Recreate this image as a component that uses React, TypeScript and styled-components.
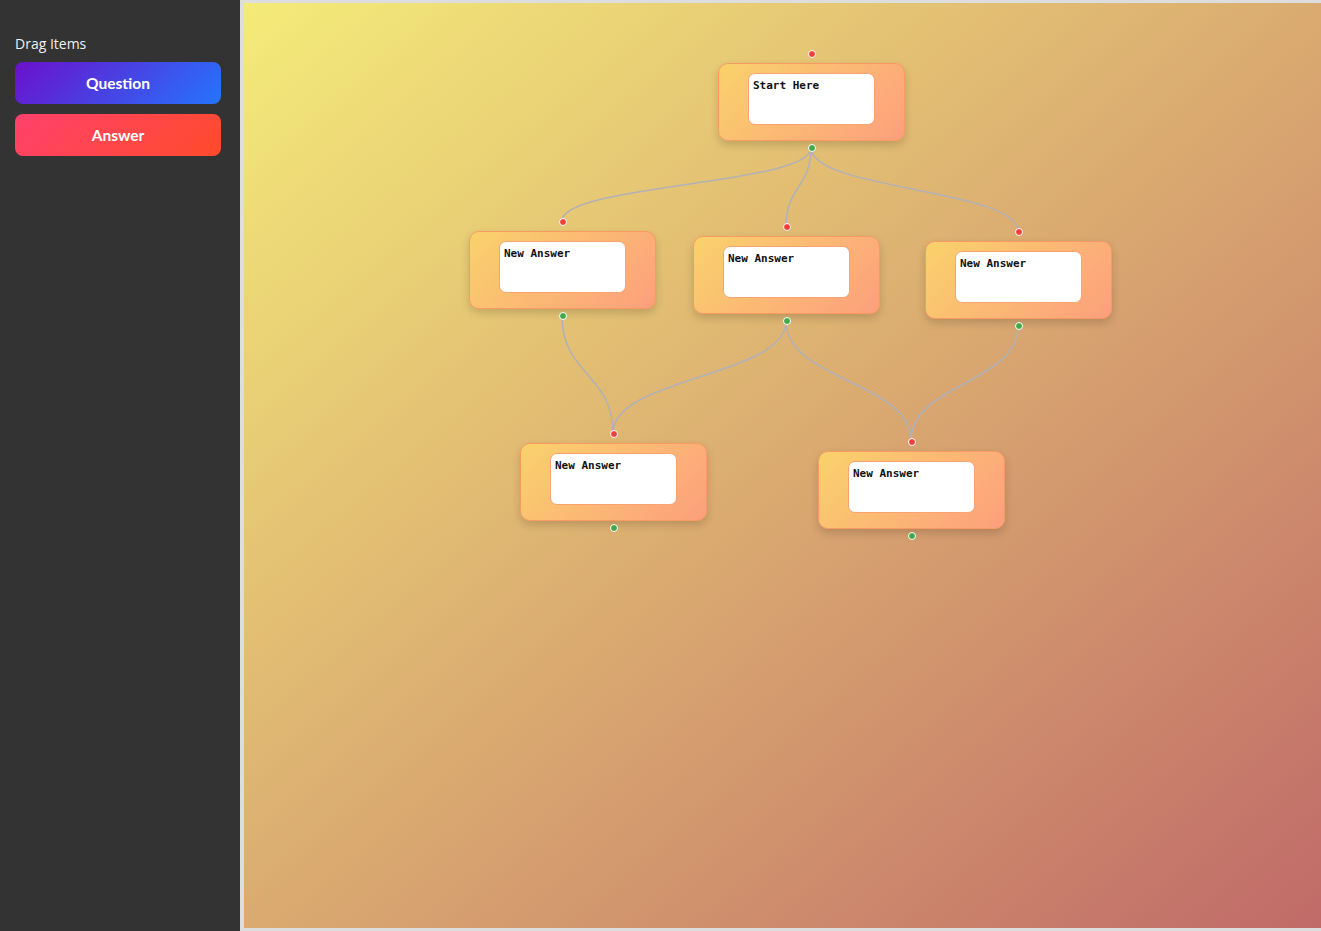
import React from "react";
import styled, { createGlobalStyle } from "styled-components";

const GlobalStyle = createGlobalStyle`
  html, body { margin: 0; padding: 0; height: 100%; overflow: hidden; }
  body { font-family: "Open Sans", "Noto Sans", sans-serif; }
  #root { height: 100%; }
  * { box-sizing: border-box; }
`;

const Layout = styled.div`
  display: flex;
  height: 100vh;
  width: 100vw;
  overflow: hidden;
`;

const Sidebar = styled.aside`
  flex: 0 0 240px;
  background: #333333;
  padding: 34px 19px 15px 15px;
  display: flex;
  flex-direction: column;
  gap: 10px;
`;

const Title = styled.div`
  color: #f0f0f0;
  font-size: 14px;
  line-height: 20px;
  margin-bottom: -2px;
`;

const DragButton = styled.div<{ $from: string; $to: string }>`
  height: 42px;
  border-radius: 8px;
  background: linear-gradient(135deg, ${(p) => p.$from}, ${(p) => p.$to});
  color: #ffffff;
  font-family: Lato, "Open Sans", sans-serif;
  font-weight: 700;
  font-size: 15.5px;
  display: flex;
  align-items: center;
  justify-content: center;
  cursor: grab;
`;

const Canvas = styled.main`
  flex: 0 0 calc(100vw - 240px);
  box-sizing: content-box;
  height: calc(100vh - 6px);
  border: 3px solid #dddddd;
  border-left-width: 4px;
  position: relative;
  background: linear-gradient(to bottom right, #f4eb79, #c06a68);
  overflow: hidden;
`;

const EdgeLayer = styled.svg`
  position: absolute;
  inset: 0;
  width: 100%;
  height: 100%;
  pointer-events: none;
`;

const NodeBox = styled.div`
  position: absolute;
  width: 187px;
  height: 78px;
  padding: 9px 29px 0;
  border-radius: 10px;
  border: 1px solid #f89a62;
  background: linear-gradient(135deg, #f9d26b, #fd9f7d);
  box-shadow: 0 4px 8px rgba(0, 0, 0, 0.16);
`;

const NodeInner = styled.div`
  height: 52px;
  background: #ffffff;
  border: 1px solid #f9a373;
  border-radius: 7px;
  padding: 5px 4px;
  font-family: "DejaVu Sans Mono", "Liberation Mono", monospace;
  font-size: 11px;
  font-weight: 700;
  line-height: 14px;
  color: #111;
`;

const Handle = styled.div<{ $kind: "in" | "out" }>`
  position: absolute;
  left: 50%;
  width: 8px;
  height: 8px;
  margin-left: -4px;
  border-radius: 50%;
  border: 1px solid #ffffff;
  background: ${(p) => (p.$kind === "in" ? "#f0403a" : "#43a84a")};
  ${(p) => (p.$kind === "in" ? "top: -14px;" : "bottom: -12px;")}
`;

type NodeData = { id: string; label: string; x: number; y: number };

const nodes: NodeData[] = [
  { id: "s", label: "Start Here", x: 474, y: 60 },
  { id: "a1", label: "New Answer", x: 225, y: 228 },
  { id: "a2", label: "New Answer", x: 449, y: 233 },
  { id: "a3", label: "New Answer", x: 681, y: 238 },
  { id: "a4", label: "New Answer", x: 276, y: 440 },
  { id: "a5", label: "New Answer", x: 574, y: 448 },
];

const edges: [string, string][] = [
  ["s", "a1"],
  ["s", "a2"],
  ["s", "a3"],
  ["a1", "a4"],
  ["a2", "a4"],
  ["a2", "a5"],
  ["a3", "a5"],
];

const byId = Object.fromEntries(nodes.map((n) => [n.id, n]));

function edgePath(a: NodeData, b: NodeData) {
  const sx = a.x + 93;
  const sy = a.y + 85;
  const tx = b.x + 93;
  const ty = b.y - 10;
  const d = Math.abs(ty - sy) * 0.5;
  return `M ${sx} ${sy} C ${sx} ${sy + d}, ${tx} ${ty - d}, ${tx} ${ty}`;
}

export default function App() {
  return (
    <>
      <GlobalStyle />
      <Layout>
        <Sidebar>
          <Title>Drag Items</Title>
          <DragButton $from="#6a11cb" $to="#2575fc">Question</DragButton>
          <DragButton $from="#ff416c" $to="#ff4b2b">Answer</DragButton>
        </Sidebar>
        <Canvas>
          <EdgeLayer>
            {edges.map(([a, b]) => (
              <path
                key={a + b}
                d={edgePath(byId[a], byId[b])}
                fill="none"
                stroke="#b1b1b7"
                strokeWidth={1.5}
              />
            ))}
          </EdgeLayer>
          {nodes.map((n) => (
            <NodeBox key={n.id} style={{ left: n.x, top: n.y }}>
              <Handle $kind="in" />
              <NodeInner>{n.label}</NodeInner>
              <Handle $kind="out" />
            </NodeBox>
          ))}
        </Canvas>
      </Layout>
    </>
  );
}
